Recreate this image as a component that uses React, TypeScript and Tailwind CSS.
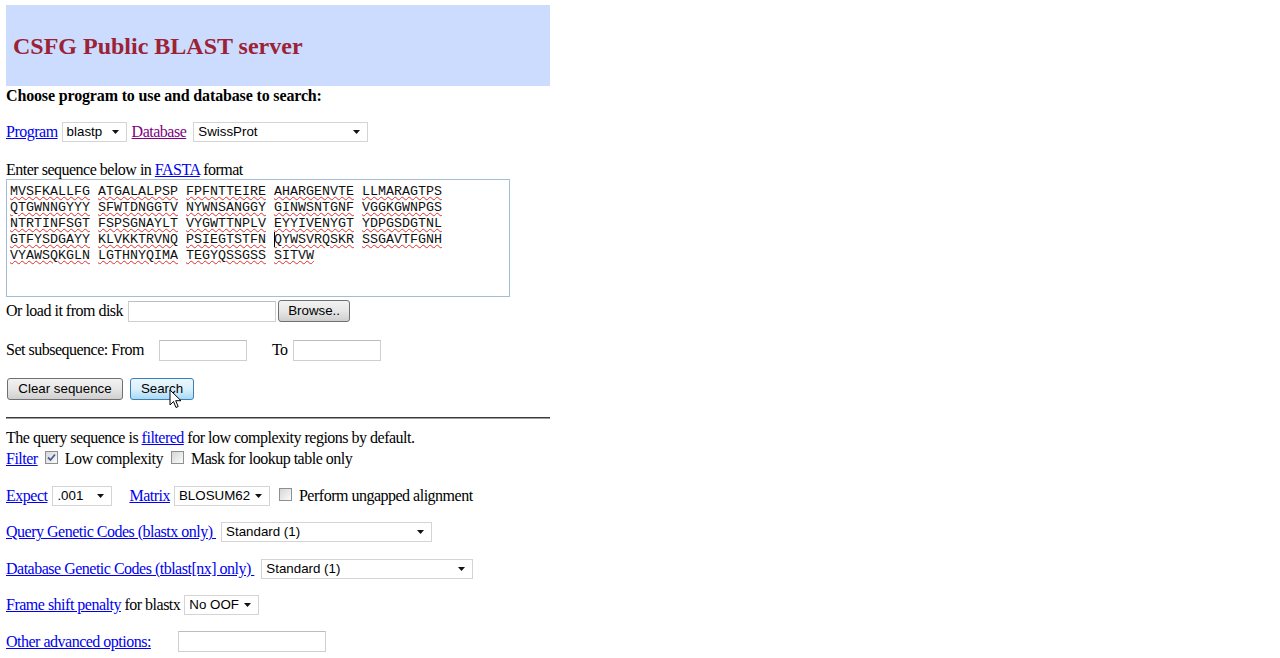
import type { ReactNode } from "react"

const serif = "font-['Liberation_Serif','Times_New_Roman',serif]"
const sans = "font-['Liberation_Sans',Arial,sans-serif]"

const sequence = [
    ["MVSFKALLFG", "ATGALALPSP", "FPFNTTEIRE", "AHARGENVTE", "LLMARAGTPS"],
    ["QTGWNNGYYY", "SFWTDNGGTV", "NYWNSANGGY", "GINWSNTGNF", "VGGKGWNPGS"],
    ["NTRTINFSGT", "FSPSGNAYLT", "VYGWTTNPLV", "EYYIVENYGT", "YDPGSDGTNL"],
    ["GTFYSDGAYY", "KLVKKTRVNQ", "PSIEGTSTFN", "QYWSVRQSKR", "SSGAVTFGNH"],
    ["VYAWSQKGLN", "LGTHNYQIMA", "TEGYQSSGSS", "SITVW"],
]

function Link(props: { children: ReactNode, visited?: boolean }) {
    return (
        <a href="#" className={props.visited ? "underline text-[#800080] whitespace-pre" : "underline text-[#0000ee] whitespace-pre"}>
            {props.children}
        </a>
    )
}

function Select(props: { value: string, width: number, className?: string }) {
    return (
        <div
            className={`h-[20px] flex items-center justify-between border border-[#d4d4d4] bg-white pl-[4px] pr-[7px] text-[13.33px] tracking-normal text-black ${sans} ${props.className ?? ""}`}
            style={{ width: props.width }}
        >
            <span className="whitespace-pre">{props.value}</span>
            <svg width="7" height="4" viewBox="0 0 7 4"><path d="M0 0h7L3.5 4z" fill="#111" /></svg>
        </div>
    )
}

function TextInput(props: { width: number, className?: string }) {
    return (
        <div
            className={`h-[21px] border border-[#cfcfcf] border-t-[#bdbdbd] bg-white ${props.className ?? ""}`}
            style={{ width: props.width }}
        />
    )
}

function Checkbox(props: { checked?: boolean, className?: string }) {
    return (
        <div className={`w-[13px] h-[13px] border border-[#8e8f8f] bg-gradient-to-br from-[#d6d6d6] to-[#fbfbfb] flex items-center justify-center ${props.className ?? ""}`}>
            {props.checked ? (
                <svg width="9" height="9" viewBox="0 0 9 9">
                    <path d="M1 4.5l2.5 2.5L8 1.5" stroke="#4a5f97" strokeWidth="1.8" fill="none" />
                </svg>
            ) : null}
        </div>
    )
}

function WinButton(props: { label: string, width: number, hover?: boolean, className?: string }) {
    return (
        <div
            className={`h-[22px] rounded-[3px] border flex items-center justify-center text-[13.33px] tracking-normal text-black ${sans} ${props.hover
                ? "border-[#3c7fb1] bg-gradient-to-b from-[#eaf6fd] via-[#d9f0fc] to-[#a7d9f5]"
                : "border-[#707070] bg-gradient-to-b from-[#f2f2f2] via-[#e6e6e6] to-[#cfcfcf]"} ${props.className ?? ""}`}
            style={{ width: props.width }}
        >
            {props.label}
        </div>
    )
}

export default function App() {
    return (
        <div className={`relative min-h-[658px] bg-white text-black text-[16px] leading-[18px] tracking-[-0.5px] ${serif}`}>
            <div className="w-[544px] ml-[6px] pt-[5px]">
                <div className="h-[81px] bg-[#cbdcff] flex items-center px-[7px]">
                    <h1 className="text-[24px] font-bold text-[#9b2335] leading-none tracking-normal">CSFG Public BLAST server</h1>
                </div>

                <div className="font-bold h-[18px] mt-[1px] tracking-[-0.15px]">Choose program to use and database to search:</div>

                <div className="flex items-center h-[20px] mt-[17px]">
                    <Link>Program</Link>
                    <Select value="blastp" width={65} className="ml-[4px]" />
                    <span className="ml-[5px]"><Link visited>Database</Link></span>
                    <Select value="SwissProt" width={175} className="ml-[7px]" />
                </div>

                <div className="h-[18px] mt-[19px]">Enter sequence below in <Link>FASTA</Link> format</div>

                <div className="relative w-[504px] h-[118px] mt-[0px] border border-[#a3bdd8] pl-[3px] pt-[4px] font-['Liberation_Mono','Courier_New',monospace] text-[13.33px] leading-[16px] tracking-normal text-[#111]">
                    {sequence.map((row, i) => (
                        <div key={i} className="whitespace-pre h-[16px] flex">
                            {row.map((word, j) => (
                                <span key={j} className="whitespace-pre">
                                    <span className="underline decoration-wavy decoration-[#e0302c] decoration-[1px] underline-offset-[1px]">{word}</span>
                                    {j < row.length - 1 ? " " : ""}
                                </span>
                            ))}
                        </div>
                    ))}
                    <div className="absolute left-[267px] top-[52px] w-[1px] h-[15px] bg-black" />
                </div>

                <div className="flex items-center h-[22px] mt-[3px]">
                    <span className="whitespace-pre">Or load it from disk</span>
                    <TextInput width={148} className="ml-[5px]" />
                    <WinButton label="Browse.." width={72} className="ml-[2px]" />
                </div>

                <div className="flex items-center h-[22px] mt-[17px]">
                    <span className="whitespace-pre">Set subsequence: From</span>
                    <TextInput width={88} className="ml-[15px]" />
                    <span className="ml-[25px]">To</span>
                    <TextInput width={88} className="ml-[5px]" />
                </div>

                <div className="flex items-center h-[22px] mt-[17px] pl-[1px]">
                    <WinButton label="Clear sequence" width={116} />
                    <WinButton label="Search" width={64} hover className="ml-[7px]" />
                </div>

                <div className="mt-[17px] h-[2px] border-t border-[#3a3a3a] border-b border-b-[#a0a0a0]" />

                <div className="h-[18px] mt-[10px]">The query sequence is <Link>filtered</Link> for low complexity regions by default.</div>

                <div className="flex items-center h-[18px] mt-[3px]">
                    <Link>Filter</Link>
                    <Checkbox checked className="ml-[7px] mb-[3px]" />
                    <span className="ml-[7px] whitespace-pre">Low complexity</span>
                    <Checkbox className="ml-[8px] mb-[3px]" />
                    <span className="ml-[7px] whitespace-pre">Mask for lookup table only</span>
                </div>

                <div className="flex items-center h-[20px] mt-[18px]">
                    <Link>Expect</Link>
                    <Select value=".001" width={60} className="ml-[5px]" />
                    <span className="ml-[17px]"><Link>Matrix</Link></span>
                    <Select value="BLOSUM62" width={96} className="ml-[4px]" />
                    <Checkbox className="ml-[9px] mb-[3px]" />
                    <span className="ml-[7px] whitespace-pre">Perform ungapped alignment</span>
                </div>

                <div className="flex items-center h-[20px] mt-[16px]">
                    <Link>Query Genetic Codes (blastx only) </Link>
                    <Select value="Standard (1)" width={211} className="ml-[5px]" />
                </div>

                <div className="flex items-center h-[20px] mt-[17px]">
                    <Link>Database Genetic Codes (tblast[nx] only) </Link>
                    <Select value="Standard (1)" width={212} className="ml-[7px]" />
                </div>

                <div className="flex items-center h-[20px] mt-[16px]">
                    <Link>Frame shift penalty</Link>
                    <span className="whitespace-pre"> for blastx</span>
                    <Select value="No OOF" width={75} className="ml-[4px]" />
                </div>

                <div className="flex items-center h-[21px] mt-[16px]">
                    <Link>Other advanced options:</Link>
                    <TextInput width={148} className="ml-[27px]" />
                </div>
            </div>

            <svg className="absolute left-[169px] top-[389px]" width="13" height="21" viewBox="0 0 13 21">
                <path d="M1 1v15l3.5-3.5 2.5 6 2.2-1-2.5-5.8H12z" fill="#fff" stroke="#000" strokeWidth="1" strokeLinejoin="round" />
            </svg>
        </div>
    )
}
